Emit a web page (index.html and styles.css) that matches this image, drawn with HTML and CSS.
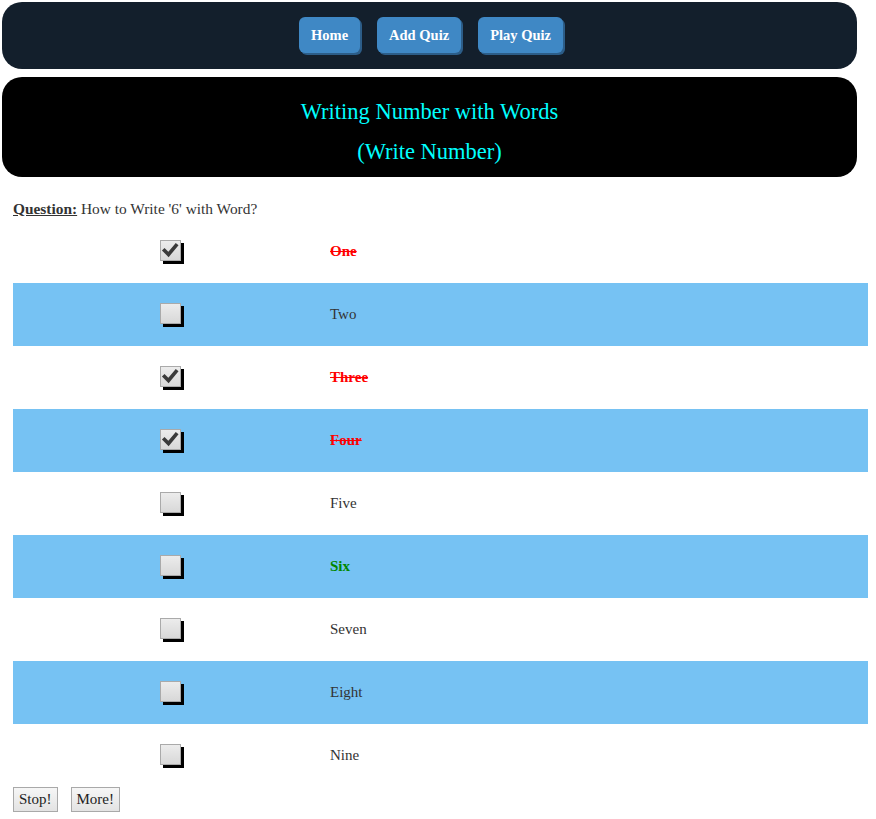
FILE: index.html
```html
<!DOCTYPE html>
<html>
<head>
<meta charset="utf-8">
<link rel="stylesheet" href="styles.css">
</head>
<body>
<nav class="navbar">
  <a class="nav-btn">Home</a>
  <a class="nav-btn">Add Quiz</a>
  <a class="nav-btn">Play Quiz</a>
</nav>
<header class="title">
  <div>Writing Number with Words</div>
  <div>(Write Number)</div>
</header>
<main class="quiz">
  <p class="question"><b class="q-label">Question:</b> How to Write '6' with Word?</p>
  <div class="options">
    <div class="row"><span class="box"><svg class="tick" viewBox="0 0 19 19"><path d="M3.5 9.5 L7.5 13.5 L15 4.5"/></svg></span><span class="ans wrong">One</span></div>
    <div class="row alt"><span class="box"></span><span class="ans">Two</span></div>
    <div class="row"><span class="box"><svg class="tick" viewBox="0 0 19 19"><path d="M3.5 9.5 L7.5 13.5 L15 4.5"/></svg></span><span class="ans wrong">Three</span></div>
    <div class="row alt"><span class="box"><svg class="tick" viewBox="0 0 19 19"><path d="M3.5 9.5 L7.5 13.5 L15 4.5"/></svg></span><span class="ans wrong">Four</span></div>
    <div class="row"><span class="box"></span><span class="ans">Five</span></div>
    <div class="row alt"><span class="box"></span><span class="ans right">Six</span></div>
    <div class="row"><span class="box"></span><span class="ans">Seven</span></div>
    <div class="row alt"><span class="box"></span><span class="ans">Eight</span></div>
    <div class="row"><span class="box"></span><span class="ans">Nine</span></div>
  </div>
  <div class="actions">
    <button class="btn">Stop!</button>
    <button class="btn">More!</button>
  </div>
</main>
</body>
</html>
```
FILE: styles.css
```css
html, body { margin: 0; padding: 0; background: #fff; }
body {
  font-family: "Liberation Serif", "Times New Roman", serif;
  color: #333;
  width: 876px;
}
.navbar {
  margin: 2px 0 0 2px;
  width: 855px;
  height: 67px;
  background: #131f2c;
  border-radius: 20px;
  display: flex;
  justify-content: center;
  align-items: flex-start;
  gap: 17px;
  padding-top: 15px;
  padding-left: 3px;
  box-sizing: border-box;
}
.nav-btn {
  display: inline-block;
  background: #3f88c5;
  color: #fff;
  font-weight: bold;
  font-size: 14.5px;
  line-height: 36px;
  height: 36px;
  padding: 0 12px;
  border-radius: 6px;
  box-shadow: 2px 2px 0 #2c5d88;
}
.title {
  margin: 8px 0 0 2px;
  width: 855px;
  height: 100px;
  background: #000;
  border-radius: 20px;
  color: #0ff;
  font-size: 22.5px;
  text-align: center;
  padding-top: 15px;
  box-sizing: border-box;
  line-height: 40px;
}
.quiz { padding: 0 8px 0 13px; }
.question {
  margin: 22px 0 0 0;
  font-size: 15.4px;
  line-height: 20px;
}
.q-label { text-decoration: underline; }
.options { display: flex; flex-direction: column; margin-top: 1px; }
.row {
  display: grid;
  grid-template-columns: 317px 1fr;
  align-items: center;
  height: 63px;
}
.row.alt { background: #76c2f3; }
.box {
  justify-self: start;
  margin-left: 147px;
  width: 21px;
  height: 21px;
  box-sizing: border-box;
  border: 1px solid #aaa;
  background: linear-gradient(#ececec, #d8d8d8);
  box-shadow: 3px 3px 0 #000;
  margin-top: -3px;
  display: flex;
}
.tick {
  width: 19px;
  height: 19px;
  fill: none;
  stroke: #3a3a3a;
  stroke-width: 3.6;
  stroke-linecap: square;
}
.ans { font-size: 15px; }
.ans.wrong { color: #f00; font-weight: bold; text-decoration: line-through; }
.ans.right { color: #080; font-weight: bold; }
.actions { display: flex; gap: 13px; margin-top: 0; }
.btn {
  font-family: "Liberation Serif", "Times New Roman", serif;
  font-size: 15px;
  color: #222;
  background: linear-gradient(#f6f6f6, #e3e3e3);
  border: 1px solid #a9a9a9;
  border-radius: 0;
  padding: 2px 5px;
  height: 25px;
}
```
